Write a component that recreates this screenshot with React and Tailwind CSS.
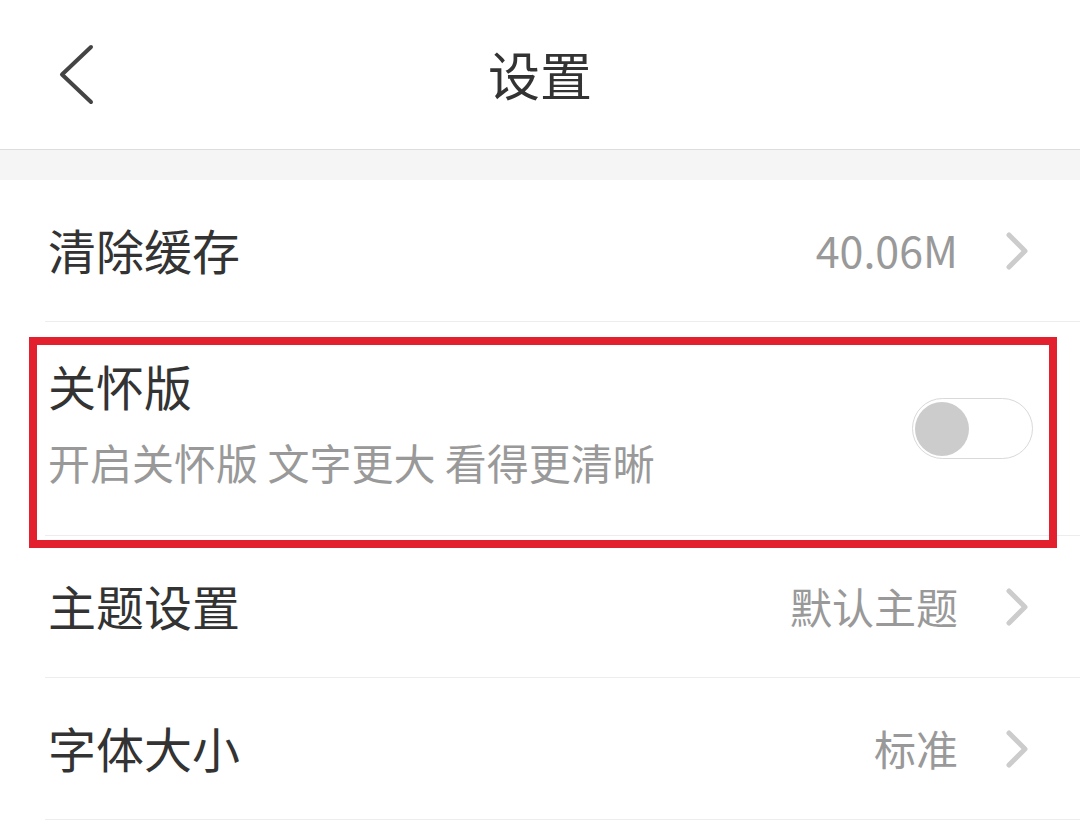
import React from "react";

const FONT = { fontFamily: '"Noto Sans CJK SC", "Noto Sans", sans-serif' };

function ChevronRight() {
  return (
    <svg width="24" height="40" viewBox="0 0 24 40" className="block">
      <polyline points="4,4 20,20 4,36" fill="none" stroke="#cccccc" strokeWidth="5" strokeLinecap="round" strokeLinejoin="round" />
    </svg>
  );
}

function NavRow({ label, value, valueClass = "text-[42px]" }) {
  return (
    <div className="ml-[45px] h-[142px] border-b border-[#ededed] flex items-center pl-[3px] pr-[51px]">
      <div className="flex-1 text-[48px] leading-none text-[#333333] pb-[4px]">{label}</div>
      <div className={`${valueClass} leading-none text-[#999999] mr-[47px] pb-[2px]`}>{value}</div>
      <ChevronRight />
    </div>
  );
}

export default function App() {
  return (
    <div className="relative w-[1080px] h-[828px] overflow-hidden bg-white" style={FONT}>
      {/* Header */}
      <div className="h-[150px] grid grid-cols-[1fr_auto_1fr] items-center border-b border-[#dddddd] bg-white">
        <div className="pl-[58px] flex items-center">
          <svg width="38" height="62" viewBox="0 0 38 62" className="block">
            <polyline points="33,3 4,30.5 33,58" fill="none" stroke="#444444" strokeWidth="4" strokeLinecap="round" strokeLinejoin="round" />
          </svg>
        </div>
        <div className="text-[52px] leading-none text-[#333333] pb-[2px]">设置</div>
        <div />
      </div>

      {/* Gap band */}
      <div className="h-[30px] bg-[#f5f5f5]" />

      {/* List */}
      <div className="bg-white">
        <NavRow label="清除缓存" value="40.06M" valueClass="text-[43px]" />

        <div className="ml-[45px] h-[214px] border-b border-[#ededed] flex items-center pl-[3px] pr-[47px]">
          <div className="flex-1 flex flex-col gap-[32px]">
            <div className="text-[48px] leading-none text-[#333333] mt-[-14px]">关怀版</div>
            <div className="text-[42px] leading-none text-[#999999]">开启关怀版 文字更大 看得更清晰</div>
          </div>
          <div className="w-[121px] h-[61px] rounded-full border border-[#d9d9d9] bg-white flex items-center pl-[2px]">
            <div className="w-[54px] h-[54px] rounded-full bg-[#cccccc]" />
          </div>
        </div>

        <NavRow label="主题设置" value="默认主题" />
        <NavRow label="字体大小" value="标准" />
      </div>

      {/* Annotation box */}
      <div className="absolute left-[29px] top-[337px] w-[1028px] h-[211px] border-[8px] border-[#e3202d] pointer-events-none" />
    </div>
  );
}
